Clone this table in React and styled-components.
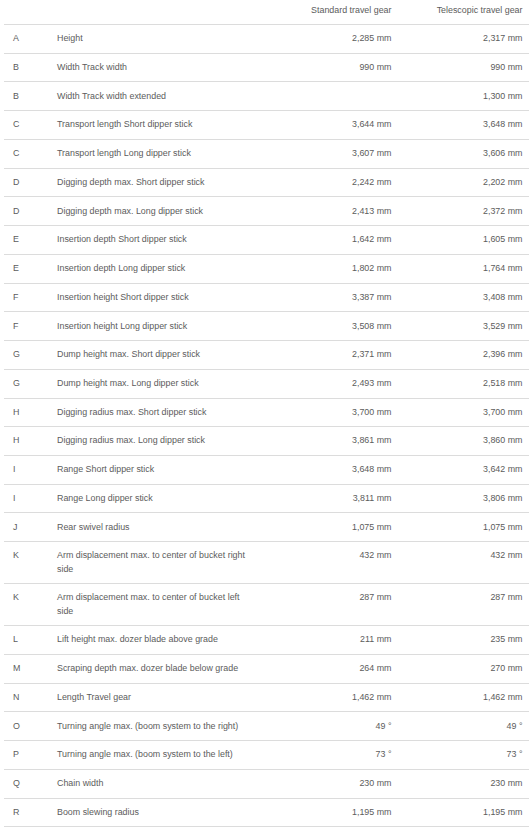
import React from "react";
import styled, { createGlobalStyle } from "styled-components";

const Global = createGlobalStyle`
  html, body { margin: 0; padding: 0; background: #fff; overflow: hidden; }
  body { font-family: "Liberation Sans", Arial, sans-serif; }
`;

const Table = styled.table`
  margin-left: 4px;
  width: 528px;
  table-layout: fixed;
  border-collapse: collapse;
  font-family: "Liberation Sans", Arial, sans-serif;
  font-size: 8.9px;
  line-height: 13.3px;
  color: #5c5c5c;
`;

const Th = styled.th`
  font-weight: normal;
  text-align: ${(p) => (p.$right ? "right" : "left")};
  padding: 4px 9.5px 6.7px 9px;
  border-bottom: 1px solid #dcdcdc;
  white-space: nowrap;
`;

const Td = styled.td`
  text-align: ${(p) => (p.$right ? "right" : "left")};
  vertical-align: top;
  padding: 7.22px 9.5px 7.22px 9px;
  border-bottom: 1px solid #dcdcdc;
`;

const rows = [
  ["A", "Height", "2,285 mm", "2,317 mm"],
  ["B", "Width Track width", "990 mm", "990 mm"],
  ["B", "Width Track width extended", "", "1,300 mm"],
  ["C", "Transport length Short dipper stick", "3,644 mm", "3,648 mm"],
  ["C", "Transport length Long dipper stick", "3,607 mm", "3,606 mm"],
  ["D", "Digging depth max. Short dipper stick", "2,242 mm", "2,202 mm"],
  ["D", "Digging depth max. Long dipper stick", "2,413 mm", "2,372 mm"],
  ["E", "Insertion depth Short dipper stick", "1,642 mm", "1,605 mm"],
  ["E", "Insertion depth Long dipper stick", "1,802 mm", "1,764 mm"],
  ["F", "Insertion height Short dipper stick", "3,387 mm", "3,408 mm"],
  ["F", "Insertion height Long dipper stick", "3,508 mm", "3,529 mm"],
  ["G", "Dump height max. Short dipper stick", "2,371 mm", "2,396 mm"],
  ["G", "Dump height max. Long dipper stick", "2,493 mm", "2,518 mm"],
  ["H", "Digging radius max. Short dipper stick", "3,700 mm", "3,700 mm"],
  ["H", "Digging radius max. Long dipper stick", "3,861 mm", "3,860 mm"],
  ["I", "Range Short dipper stick", "3,648 mm", "3,642 mm"],
  ["I", "Range Long dipper stick", "3,811 mm", "3,806 mm"],
  ["J", "Rear swivel radius", "1,075 mm", "1,075 mm"],
  ["K", "Arm displacement max. to center of bucket right side", "432 mm", "432 mm"],
  ["K", "Arm displacement max. to center of bucket left side", "287 mm", "287 mm"],
  ["L", "Lift height max. dozer blade above grade", "211 mm", "235 mm"],
  ["M", "Scraping depth max. dozer blade below grade", "264 mm", "270 mm"],
  ["N", "Length Travel gear", "1,462 mm", "1,462 mm"],
  ["O", "Turning angle max. (boom system to the right)", "49 °", "49 °"],
  ["P", "Turning angle max. (boom system to the left)", "73 °", "73 °"],
  ["Q", "Chain width", "230 mm", "230 mm"],
  ["R", "Boom slewing radius", "1,195 mm", "1,195 mm"],
];

export default function App() {
  return (
    <>
      <Global />
      <Table>
        <colgroup>
          <col style={{ width: 44 }} />
          <col style={{ width: 213 }} />
          <col style={{ width: 140 }} />
          <col style={{ width: 131 }} />
        </colgroup>
        <thead>
          <tr>
            <Th />
            <Th />
            <Th $right>Standard travel gear</Th>
            <Th $right>Telescopic travel gear</Th>
          </tr>
        </thead>
        <tbody>
          {rows.map((r, i) => (
            <tr key={i}>
              <Td>{r[0]}</Td>
              <Td>{r[1]}</Td>
              <Td $right>{r[2]}</Td>
              <Td $right>{r[3]}</Td>
            </tr>
          ))}
        </tbody>
      </Table>
    </>
  );
}
